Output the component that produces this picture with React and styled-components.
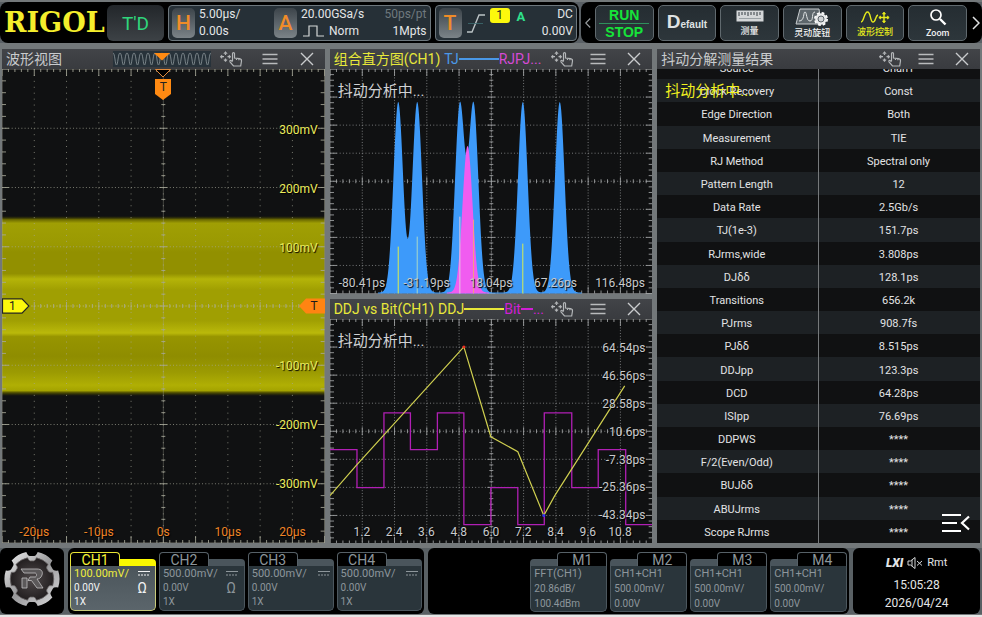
import React from "react";
import styled, { createGlobalStyle, css } from "styled-components";

const GlobalStyle = createGlobalStyle`
  * {
    box-sizing: border-box;
  }
  body {
    margin: 0;
    background: #e6e6e6;
    font-family: Roboto, "Noto Sans CJK SC", sans-serif;
  }
  button {
    font: inherit;
    color: inherit;
    background: none;
    border: 0;
    padding: 0;
    margin: 0;
    cursor: pointer;
  }
`;

const Screen = styled.div`
  display: flex;
  flex-direction: column;
  min-height: 100vh;
  padding: 2px 0 1px;
  background: #73787a;
  border-bottom: 2px solid #e6e6e6;
  color: #e4e6e7;
`;

/* ---------- top bar ---------- */

const TopBar = styled.header`
  display: flex;
  gap: 2px;
  height: 41px;
  background: #5a6065;
`;

const BarGroup = styled.div`
  display: flex;
  align-items: stretch;
  flex: ${(p) => p.$grow} 1 0;
  gap: 4px;
  padding: 3px 2px 2px 4px;
  background: #000;
  border-radius: 8px;
`;

const Logo = styled.div`
  width: 99px;
  font: bold 27px/36px "DejaVu Serif", serif;
  color: #f4ee2c;
`;

const TrigState = styled.button`
  width: 57px;
  border-radius: 6px;
  background: linear-gradient(#22262a, #3d4246);
  color: #2fd67c;
  font-size: 19px;
`;

const InfoPanel = styled.div`
  display: flex;
  align-items: center;
  flex: ${(p) => p.$grow} 1 0;
  gap: 4px;
  padding: 0 3px;
  background: #263037;
  border: 1px solid #6d777d;
  border-radius: 4px;
`;

const Knob = styled.button`
  width: 23px;
  height: 30px;
  border-radius: 5px;
  background: linear-gradient(#3c444a, #7b8388);
  color: #f08c28;
  font-size: 21px;
  font-weight: 500;
  line-height: 30px;
`;

const Lines = styled.div`
  display: flex;
  flex-direction: column;
  flex: ${(p) => (p.$grow ? 1 : "none")};
  width: ${(p) => p.$width || "auto"};
  text-align: ${(p) => p.$align || "left"};
  font-size: 12px;
  line-height: 17px;
  white-space: nowrap;
`;

const Dim = styled.span`
  color: #6f797e;
`;

const WithIcon = styled.span`
  display: flex;
  gap: 5px;
  padding-left: 2px;
`;

const TrigLine = styled.div`
  display: flex;
  align-items: flex-start;
  gap: 7px;
  flex: 1;
  height: 30px;
`;

const SourceChip = styled.span`
  width: 20px;
  height: 15px;
  border-radius: 3px;
  background: #fcf80c;
  color: #222;
  font-size: 12px;
  line-height: 15px;
  text-align: center;
`;

const Auto = styled.span`
  color: #2fe08c;
  font-size: 13px;
  font-weight: 700;
  line-height: 17px;
`;

const ToolButton = styled.button`
  display: flex;
  flex-direction: column;
  align-items: center;
  justify-content: center;
  flex: 1 1 0;
  gap: 1px;
  background: linear-gradient(#252d32, #2d363b);
  border: 1px solid #60696e;
  border-radius: 5px;
  color: ${(p) => p.$color || "#f0f1f2"};
  font-size: 9px;
  font-weight: 500;
  line-height: 12px;
  white-space: nowrap;
`;

const RunStop = styled(ToolButton)`
  color: #16e43a;
  font: bold 14px/16px "Liberation Sans", sans-serif;
  gap: 0;
  span + span {
    border-top: 1px solid #2f8f5c;
  }
  span {
    width: 50px;
  }
`;

const DefaultLabel = styled.div`
  font: bold 10px/20px "Liberation Sans", sans-serif;
  color: #dfe2e3;
  &::first-letter {
    font-size: 19px;
  }
`;

const Scroll = styled.button`
  width: ${(p) => p.$width};
  display: flex;
  align-items: center;
  justify-content: center;
`;

/* ---------- panels ---------- */

const Main = styled.main`
  display: grid;
  grid-template-columns: repeat(3, minmax(0, 1fr));
  gap: 5px;
  flex: 1;
  margin: 6px 2px 5px;
`;

const Column = styled.div`
  display: grid;
  grid-template-columns: minmax(0, 1fr);
  grid-auto-rows: minmax(0, 1fr);
  gap: 5px;
`;

const PanelBox = styled.section`
  display: flex;
  flex-direction: column;
  min-height: 0;
  background: #101112;
`;

const PanelHead = styled.div`
  display: flex;
  align-items: center;
  height: 20px;
  padding-left: 4px;
  background: linear-gradient(#424448, #393b3f);
  color: ${(p) => p.$color || "#c9cbcd"};
`;

const Title = styled.h2`
  margin: 0;
  font-size: 14px;
  font-weight: 400;
  line-height: 20px;
  white-space: nowrap;
`;

const Legend = styled.div`
  display: flex;
  align-items: center;
  flex: 1;
  min-width: 0;
  padding-left: 4px;
  font-size: 14px;
  line-height: 20px;
`;

const Key = styled.span`
  color: ${(p) => p.$color};
`;

const KeyLine = styled.span`
  width: ${(p) => p.$width};
  height: 2px;
  background: ${(p) => p.$color};
`;

const HeadButtons = styled.div`
  display: flex;
  margin-left: auto;
  button {
    width: ${(p) => (p.$wide ? "39px" : "36px")};
    height: 20px;
    display: flex;
    align-items: center;
    justify-content: center;
  }
  button:last-child {
    width: 36px;
  }
`;

const Preview = styled.div`
  margin-left: 51px;
  height: 16px;
  background: #27323a;
  svg {
    display: block;
  }
`;

const Plot = styled.div`
  position: relative;
  flex: 1;
  min-height: 0;
  overflow: hidden;
  > svg {
    position: absolute;
    width: 100%;
    height: 100%;
  }
`;

const axisText = css`
  color: ${(p) => p.$color || "#c8cacc"};
  font-size: 12px;
  line-height: 14px;
  text-shadow: 1px 1px 1px #000;
`;

const XAxis = styled.div`
  ${axisText}
  position: absolute;
  left: 0;
  right: 0;
  bottom: 4px;
  display: flex;
  padding: 0 ${(p) => p.$inset || "0"};
  span {
    flex: 1 1 0;
    text-align: center;
  }
`;

const YAxis = styled.div`
  ${axisText}
  position: absolute;
  inset: 2px 7px 0 auto;
  display: grid;
  grid-template-rows: 1fr repeat(7, 2fr) 1fr;
  align-items: center;
  text-align: right;
  &::before {
    content: "";
  }
`;

const Busy = styled.div`
  position: absolute;
  top: 10px;
  left: 8px;
  font-size: 15px;
  line-height: 24px;
  color: ${(p) => p.$color || "#d0d2d4"};
`;

const LevelMark = styled.button`
  position: absolute;
  top: 50%;
  ${(p) => (p.$right ? "right: 0" : "left: 0")};
  width: 27px;
  height: 16px;
  transform: translateY(-50%);
  font-size: 12px;
  line-height: 16px;
  color: #1a1a1a;
  svg {
    position: absolute;
    left: 0;
    top: 0;
  }
  span {
    position: relative;
    display: block;
    text-align: ${(p) => (p.$right ? "right" : "left")};
    padding: 0 7px;
  }
`;

const TimeMark = styled.button`
  position: absolute;
  top: 0;
  left: 50%;
  width: 18px;
  height: 32px;
  transform: translateX(-50%);
  svg {
    position: absolute;
    left: 0;
    top: 0;
  }
  span {
    position: relative;
    display: block;
    padding-top: 4px;
    font-size: 12px;
    color: #222;
  }
`;

const TableBox = styled.div`
  position: relative;
  display: flex;
  flex: 1;
  align-items: flex-end;
  min-height: 0;
  overflow: hidden;
`;

const Results = styled.table`
  width: 100%;
  height: calc(100% + 13px);
  border-collapse: collapse;
  table-layout: fixed;
  font-size: 11px;
  line-height: 13px;
  color: #e2e3e4;
  text-align: center;
  tr:nth-child(even) {
    background: #1d2124;
  }
  th,
  td {
    padding: 2px 2px 0 0;
    font-weight: 400;
  }
  th {
    border-right: 1px solid #76797b;
  }
`;

const Expand = styled.button`
  position: absolute;
  right: 10px;
  bottom: 8px;
  height: 22px;
`;

/* ---------- bottom bar ---------- */

const BottomBar = styled.footer`
  display: flex;
  gap: 4px;
  height: 66px;
  padding-right: 2px;
  background: #596064;
`;

const Dock = styled.div`
  display: flex;
  align-items: stretch;
  justify-content: flex-end;
  flex: ${(p) => p.$grow} 1 0;
  gap: 3px;
  padding: 4px 2px 3px;
  background: #000;
  border-radius: 6px;
`;

const MenuButton = styled.button`
  width: 64px;
  flex: none;
  background: #000;
  border-radius: 6px;
`;

const Card = styled.button`
  display: flex;
  flex-direction: column;
  flex: ${(p) => (p.$math ? "0 1 77px" : "1 1 0")};
  color: ${(p) => (p.$on ? "#f2f3f4" : "#8d969b")};
  text-align: left;
`;

const CardTop = styled.span`
  display: flex;
  flex-direction: ${(p) => (p.$math ? "row-reverse" : "row")};
  align-items: flex-end;
  width: 100%;
  height: 14px;
`;

const Tab = styled.span`
  width: 50px;
  height: 14px;
  border: 1px solid ${(p) => (p.$on ? "#e8e434" : "#566067")};
  border-bottom: 0;
  border-radius: 4px 4px 0 0;
  background: #000;
  color: ${(p) => (p.$on ? "#f6f236" : "#8d969b")};
  font-size: 14px;
  line-height: 14px;
  text-align: center;
`;

const Ridge = styled.span`
  flex: 1;
  height: 7px;
  border-radius: ${(p) => (p.$math ? "4px 0 0 0" : "0 4px 0 0")};
  background: ${(p) => (p.$on ? "#fbf800" : "#4a555c")};
`;

const CardBody = styled.span`
  display: grid;
  grid-template-columns: 1fr auto;
  align-content: center;
  width: 100%;
  flex: 1;
  padding: 0 3px;
  border: 1px solid ${(p) => (p.$on ? "#c9cb7c" : "#4c575e")};
  border-top: 0;
  border-radius: 0 0 5px 5px;
  background: ${(p) => (p.$on ? "linear-gradient(#4b555b, #5b656b)" : "#2a353b")};
  font-size: 10px;
  line-height: ${(p) => (p.$math ? "15px" : "14px")};
`;

const Scale = styled.span`
  font-size: 11px;
  color: ${(p) => (p.$on ? "#f0ee3c" : "inherit")};
`;

const Omega = styled.span`
  padding-right: 5px;
  font-size: 14px;
  text-align: center;
`;

const Status = styled.div`
  display: flex;
  flex-direction: column;
  align-items: center;
  flex: 128 1 0;
  padding-top: 5px;
  background: #000;
  border-radius: 6px;
  font-size: 12px;
  line-height: 18px;
`;

const StatusRow = styled.div`
  display: flex;
  align-items: center;
  gap: 4px;
  height: 20px;
  margin-bottom: 3px;
  font-size: 11px;
  b {
    font-style: italic;
    font-weight: 900;
    font-size: 12px;
  }
`;

/* ---------- data ---------- */

const results = [
  ["Source", "Chan1"],
  ["Clock Recovery", "Const"],
  ["Edge Direction", "Both"],
  ["Measurement", "TIE"],
  ["RJ Method", "Spectral only"],
  ["Pattern Length", "12"],
  ["Data Rate", "2.5Gb/s"],
  ["TJ(1e-3)", "151.7ps"],
  ["RJrms,wide", "3.808ps"],
  ["DJδδ", "128.1ps"],
  ["Transitions", "656.2k"],
  ["PJrms", "908.7fs"],
  ["PJδδ", "8.515ps"],
  ["DDJpp", "123.3ps"],
  ["DCD", "64.28ps"],
  ["ISIpp", "76.69ps"],
  ["DDPWS", "****"],
  ["F/2(Even/Odd)", "****"],
  ["BUJδδ", "****"],
  ["ABUJrms", "****"],
  ["Scope RJrms", "****"],
];

const channels = [
  { name: "CH1", scale: "100.00mV/", offset: "0.00V", probe: "1X", omega: true, on: true },
  { name: "CH2", scale: "500.00mV/", offset: "0.00V", probe: "1X", omega: true },
  { name: "CH3", scale: "500.00mV/", offset: "0.00V", probe: "1X" },
  { name: "CH4", scale: "500.00mV/", offset: "0.00V", probe: "1X" },
];

const maths = [
  { name: "M1", expr: "FFT(CH1)", scale: "20.86dB/", offset: "100.4dBm" },
  { name: "M2", expr: "CH1+CH1", scale: "500.00mV/", offset: "0.00V" },
  { name: "M3", expr: "CH1+CH1", scale: "500.00mV/", offset: "0.00V" },
  { name: "M4", expr: "CH1+CH1", scale: "500.00mV/", offset: "0.00V" },
];

const tjPeaks = [
  [68.3, 191],
  [87.3, 191],
  [130, 188],
  [143.7, 188],
  [193, 191],
  [230, 191],
];

const spikes = [
  [68.3, 178, "#d8ee50"],
  [87.3, 168, "#a8d8c8"],
  [130, 148, "#e4c8e0"],
  [143.7, 151, "#f0a080"],
  [193, 175, "#d8ee50"],
];

const bell = (peaks, from, to, sigma) => {
  let d = `M${from} 225`;
  for (let x = from; x <= to; x += 0.5) {
    let h = 0;
    peaks.forEach(([c, a]) => {
      h += a * Math.exp(-((x - c) ** 2) / (2 * sigma * sigma));
    });
    d += `L${x} ${(224 - h).toFixed(1)}`;
  }
  return d + `L${to} 225Z`;
};

/* ---------- drawings ---------- */

function Grid({ w, h, color = "#a4a6a8" }) {
  const dx = w / 10;
  const dy = h / 8;
  const lines = [];
  for (let i = 1; i < 10; i++) {
    lines.push(
      <line key={"v" + i} x1={dx * i} x2={dx * i} y1="0" y2={h}
        strokeDasharray={`1 ${dy / 10 - 1}`} opacity="0.7" />
    );
  }
  for (let i = 1; i < 8; i++) {
    lines.push(
      <line key={"h" + i} y1={dy * i} y2={dy * i} x1="0" x2={w}
        strokeDasharray={`1 ${dx / 10 - 1}`} opacity="0.7" />
    );
  }
  let ticks = "";
  for (let i = 0; i <= 50; i++) {
    const x = (i * dx) / 5;
    const n = i % 5 ? 3 : 7;
    const c = i % 5 ? 2 : 4;
    ticks += `M${x} 0V${n}M${x} ${h}V${h - n}M${x} ${h / 2 - c}V${h / 2 + c}`;
  }
  for (let i = 0; i <= 40; i++) {
    const y = (i * dy) / 5;
    const n = i % 5 ? 4 : 7;
    const c = i % 5 ? 2 : 4;
    ticks += `M0 ${y}H${n}M${w} ${y}H${w - n}M${w / 2 - c} ${y}H${w / 2 + c}`;
  }
  return (
    <g stroke={color} strokeWidth="1" fill="none">
      {lines}
      <path d={ticks} opacity="0.85" />
      <path d={`M${w / 2} 0V${h}`} opacity="0.35" />
      <rect x="0" y="0" width={w} height={h} opacity="0.6" />
    </g>
  );
}

const bandStops = [
  [0, "#3a3900", 0],
  [0.02, "#6d6b00", 1],
  [0.04, "#a09f04", 1],
  [0.16, "#9a9902", 1],
  [0.2, "#929000", 1],
  [0.32, "#929000", 1],
  [0.35, "#b4b408", 1],
  [0.41, "#a09f02", 1],
  [0.58, "#a09f02", 1],
  [0.65, "#bab90a", 1],
  [0.67, "#979500", 1],
  [0.78, "#8f8d00", 1],
  [0.87, "#9c9b02", 1],
  [0.94, "#b0af04", 1],
  [0.97, "#a4a300", 1],
  [0.98, "#5a5800", 1],
  [1, "#3a3900", 0],
];

function Waveform() {
  return (
    <svg viewBox="0 0 323 474" preserveAspectRatio="none">
      <defs>
        <linearGradient id="band" x1="0" y1="0" x2="0" y2="1">
          {bandStops.map(([o, c, a]) => (
            <stop key={o} offset={o} stopColor={c} stopOpacity={a} />
          ))}
        </linearGradient>
      </defs>
      <rect x="0" y="147" width="323" height="180" fill="url(#band)" />
      <Grid w={323} h={474} color="#a8a99a" />
      <path d="M0 237H323" stroke="#c8c850" strokeDasharray="1 2" opacity="0.6" />
    </svg>
  );
}

function Histogram() {
  return (
    <svg viewBox="0 0 323 225" preserveAspectRatio="none">
      <Grid w={323} h={225} />
      <path d={bell(tjPeaks, 48, 252, 4.8)} fill="#3d9afa" />
      <path d={bell([[137.7, 143], [137, 4]], 117, 159, 5)} fill="#f05cf0" />
      {spikes.map(([x, y, c]) => (
        <path key={x} d={`M${x} ${y}V225`} stroke={c} strokeWidth="1" />
      ))}
    </svg>
  );
}

function BitPlot() {
  return (
    <svg viewBox="0 0 323 225" preserveAspectRatio="none">
      <Grid w={323} h={225} />
      <path
        d="M0 131H27V169H54V94H80.500V131H107.500V94H134V206H161V169H188V206H214.500V94H242V169H268.500V131H296V206H323"
        fill="none" stroke="#b01fb4" strokeWidth="1.300" />
      <path d="M0 177L27 146L134 28L161 118L188 133L214 197L225 177L295 67"
        fill="none" stroke="#d0d050" strokeWidth="1.200" />
      <circle cx="134" cy="28" r="1.500" fill="#f03020" />
      <circle cx="214" cy="197" r="1.500" fill="#3030f0" />
    </svg>
  );
}

const MoveHandIcon = () => (
  <svg width="24" height="18" viewBox="0 0 24 18" fill="none" stroke="#b4b7b9" strokeWidth="1.200">
    <path d="M6.500 3.500V5M6.500 8.500V10M3 6.700H5M8.500 6.700H10" />
    <path d="M4.800 3.600L6.500 1.500L8.200 3.600ZM4.800 9.800L6.500 11.800L8.200 9.800ZM3 5L1 6.700L3 8.400ZM10 5L12 6.700L10 8.400Z" fill="#b4b7b9" strokeWidth="0.500" />
    <path d="M13.500 11V3.600C13.500 2.300 15.500 2.300 15.500 3.600V8L20.500 8.700C22 9 22.600 9.800 22.500 11L21.700 16H14.500L11 11.800C10.400 10.700 11.700 10 12.500 10.800L13.500 11.800M17.500 8.300V10M19.800 8.600V10.300" />
  </svg>
);

const LinesIcon = () => (
  <svg width="16" height="14" stroke="#b9bbbd" strokeWidth="1.300">
    <path d="M0.500 2.500H15.500M0.500 7H15.500M0.500 11.500H15.500" />
  </svg>
);

const CloseIcon = () => (
  <svg width="14" height="14" stroke="#c9cbcd" strokeWidth="1.400">
    <path d="M1 1L13 13M13 1L1 13" />
  </svg>
);

const PreviewWave = () => {
  let d = "M0 2";
  for (let i = 0; i < 14; i++) {
    const x = i * 7;
    d += `C${x + 2} 2 ${x + 2} 14 ${x + 3.5} 14C${x + 5} 14 ${x + 5} 2 ${x + 7} 2`;
  }
  return (
    <svg width="98" height="16" viewBox="0 0 98 16">
      <path d={d} fill="none" stroke="#8d979b" strokeWidth="0.800" />
      <path d="M41 2H57L49 9.500Z" fill="#ff8a12" />
    </svg>
  );
};

const PulseIcon = () => (
  <svg width="21" height="14" viewBox="0 0 21 14" fill="none" stroke="#d4d7d8" strokeWidth="1.200">
    <path d="M0 13H6V3H14V13H21" />
  </svg>
);

const SlopeIcon = () => (
  <svg width="20" height="22" viewBox="0 0 20 22" fill="none" stroke="#bcc3c6" strokeWidth="1.400">
    <path d="M1 20H6L13 3H19" />
    <path d="M2 11.500H17" stroke="#3f6f72" strokeWidth="0.800" />
  </svg>
);

const RulerIcon = () => (
  <svg width="28" height="15" viewBox="0 0 28 15">
    <rect x="0.500" y="1.500" width="27" height="11" fill="#d4d7d9" />
    <path d="M3 3V7M6 3V6M9 3V6M12 3V7M15 3V6M18 3V6M21 3V7M24 3V6" stroke="#333b40" />
    <path d="M3 9.500H25" stroke="#9aa1a5" />
  </svg>
);

const KnobIcon = () => (
  <svg width="34" height="18" viewBox="0 0 34 18">
    <path d="M5 1H24L26 16H1Z" fill="#5d666b" stroke="#c8cccf" />
    <path d="M4 13C10 13 8 4 10 4S11 13 15 13S16 4 20 4" fill="none" stroke="#e3e6e7" />
    <circle cx="26" cy="11" r="6" fill="none" stroke="#fff" strokeWidth="2" strokeDasharray="2.700 2" />
    <circle cx="26" cy="11" r="5.800" fill="#e9ebec" />
    <circle cx="26" cy="11" r="3" fill="#cfd3d5" stroke="#596268" />
  </svg>
);

const WaveMoveIcon = () => (
  <svg width="30" height="16" viewBox="0 0 30 16" fill="none" stroke="#e6ea1c" strokeWidth="1.400">
    <path d="M1 13C4 13 4 3 7.500 3S10 13 13 13S15 7 18 6" />
    <path d="M24 4V13M19.500 8.500H28.500" />
    <path d="M22.500 5L24 3L25.500 5ZM22.500 12L24 14L25.500 12ZM20.500 7L18.800 8.500L20.500 10ZM27.500 7L29.200 8.500L27.500 10Z" fill="#e6ea1c" strokeWidth="0.800" />
  </svg>
);

const SearchIcon = () => (
  <svg width="18" height="18" viewBox="0 0 18 18" fill="none" stroke="#fff">
    <circle cx="7" cy="7" r="5" strokeWidth="1.700" />
    <path d="M11 11L16.500 16.500" strokeWidth="2.400" />
  </svg>
);

const Chevron = ({ left }) => (
  <svg width="8" height="14" viewBox="0 0 8 14" fill="none" stroke={left ? "#9a9ea1" : "#e0e2e3"} strokeWidth="1.500">
    <path d={left ? "M7 1L1 7L7 13" : "M1 1L7 7L1 13"} />
  </svg>
);

const ExpandIcon = () => (
  <svg width="28" height="20" viewBox="0 0 28 20" fill="none" stroke="#fff" strokeWidth="2.200">
    <path d="M0 2H19M0 10H15M0 18H19M27 3.500L20 10L27 16.500" />
  </svg>
);

const DcIcon = () => (
  <svg width="12" height="7" viewBox="0 0 12 7" fill="none" stroke="currentColor">
    <path d="M0 1.500H12" />
    <path d="M0 5H12" strokeDasharray="2 1" />
  </svg>
);

const MuteIcon = () => (
  <svg width="16" height="12" viewBox="0 0 16 12" fill="none" stroke="#d6d8d9" strokeWidth="1">
    <path d="M1 4V8H3.500L8 11.500V0.500L3.500 4ZM5 3V9M10 4L15 8.500M15 4L10 8.500" />
  </svg>
);

const gearPath = () => {
  let d = "";
  const at = (r, deg) => {
    const a = (deg * Math.PI) / 180;
    return `${(30 + r * Math.cos(a)).toFixed(1)} ${(30 + r * Math.sin(a)).toFixed(1)}`;
  };
  // six teeth with a scooped notch after each one
  for (let i = 0; i < 6; i++) {
    const c = i * 60;
    d += `${i ? "L" : "M"}${at(27.5, c - 18)}A27.500 27.500 0 0 1 ${at(27.5, c + 18)}`;
    d += `Q${at(23, c + 20)} ${at(23, c + 25)}L${at(23, c + 35)}Q${at(23, c + 40)} ${at(27.5, c + 42)}`;
  }
  return d + "Z";
};

const GearLogo = () => (
  <svg width="60" height="60" viewBox="0 0 60 60">
    <defs>
      <linearGradient id="metal" x1="0" y1="0" x2="1" y2="1">
        <stop offset="0" stopColor="#f2f2f2" />
        <stop offset="0.500" stopColor="#98989a" />
        <stop offset="1" stopColor="#dcdcde" />
      </linearGradient>
      <radialGradient id="core">
        <stop offset="0" stopColor="#4f494a" />
        <stop offset="1" stopColor="#231f20" />
      </radialGradient>
    </defs>
    <path d={gearPath()} fill="url(#metal)" />
    <path d={gearPath()} fill="url(#core)" stroke="#6a6768" transform="translate(6.300 6.300) scale(0.790)" />
    <path d="M19 20H35C40 20 41 23 40 26C39 29 37 30 35 30L41 39H35L29.500 31.500H26L28 28H33C35 28 35 24 33 24H22ZM20 29H25V39H20Z" fill="#5c595a" stroke="#c2c0c1" strokeWidth="0.800" />
  </svg>
);

/* ---------- components ---------- */

function Panel({ title, color, wide, preview, legend, children }) {
  return (
    <PanelBox>
      <PanelHead $color={color}>
        <Title>{title}</Title>
        {preview && (
          <Preview>
            <PreviewWave />
          </Preview>
        )}
        {legend && <Legend>{legend}</Legend>}
        <HeadButtons $wide={wide}>
          <button aria-label="move"><MoveHandIcon /></button>
          <button aria-label="menu"><LinesIcon /></button>
          <button aria-label="close"><CloseIcon /></button>
        </HeadButtons>
      </PanelHead>
      {children}
    </PanelBox>
  );
}

function ChannelCard({ item }) {
  return (
    <Card $on={item.on}>
      <CardTop>
        <Tab $on={item.on}>{item.name}</Tab>
        <Ridge $on={item.on} />
      </CardTop>
      <CardBody $on={item.on}>
        <Scale $on={item.on}>{item.scale}</Scale>
        <span><DcIcon /></span>
        <span>{item.offset}</span>
        <Omega>{item.omega ? "Ω" : ""}</Omega>
        <span>{item.probe}</span>
      </CardBody>
    </Card>
  );
}

function MathCard({ item }) {
  return (
    <Card $math>
      <CardTop $math>
        <Tab>{item.name}</Tab>
        <Ridge $math />
      </CardTop>
      <CardBody $math>
        <Scale>{item.expr}</Scale>
        <span />
        <span>{item.scale}</span>
        <span />
        <span>{item.offset}</span>
      </CardBody>
    </Card>
  );
}

function App() {
  return (
    <Screen>
      <GlobalStyle />
      <TopBar>
        <BarGroup $grow={580}>
          <Logo>RIGOL</Logo>
          <TrigState>T'D</TrigState>
          <InfoPanel $grow={267}>
            <Knob>H</Knob>
            <Lines $width="71px">
              <span>5.00µs/</span>
              <span>0.00s</span>
            </Lines>
            <Knob>A</Knob>
            <Lines $grow>
              <span>20.00GSa/s</span>
              <WithIcon>
                <PulseIcon />
                Norm
              </WithIcon>
            </Lines>
            <Lines $align="right">
              <Dim>50ps/pt</Dim>
              <span>1Mpts</span>
            </Lines>
          </InfoPanel>
          <InfoPanel $grow={141}>
            <Knob>T</Knob>
            <SlopeIcon />
            <TrigLine>
              <SourceChip>1</SourceChip>
              <Auto>A</Auto>
            </TrigLine>
            <Lines $align="right">
              <span>DC</span>
              <span>0.00V</span>
            </Lines>
          </InfoPanel>
        </BarGroup>
        <BarGroup $grow={400}>
          <Scroll $width="6px" aria-label="previous"><Chevron left /></Scroll>
          <RunStop>
            <span>RUN</span>
            <span>STOP</span>
          </RunStop>
          <ToolButton>
            <DefaultLabel>Default</DefaultLabel>
          </ToolButton>
          <ToolButton>
            <RulerIcon />
            测量
          </ToolButton>
          <ToolButton>
            <KnobIcon />
            灵动旋钮
          </ToolButton>
          <ToolButton $color="#e6ea1c">
            <WaveMoveIcon />
            波形控制
          </ToolButton>
          <ToolButton>
            <SearchIcon />
            Zoom
          </ToolButton>
          <Scroll $width="9px" aria-label="next"><Chevron /></Scroll>
        </BarGroup>
      </TopBar>

      <Main>
        <Column>
          <Panel title="波形视图" wide preview>
            <Plot>
              <Waveform />
              <YAxis $color="#ecec5c">
                {["300mV", "200mV", "100mV", "", "-100mV", "-200mV", "-300mV"].map((t, i) => (
                  <span key={i}>{t}</span>
                ))}
              </YAxis>
              <XAxis $color="#f08426">
                {["-20µs", "-10µs", "0s", "10µs", "20µs"].map((t) => (
                  <span key={t}>{t}</span>
                ))}
              </XAxis>
              <TimeMark aria-label="trigger position">
                <svg width="18" height="32" viewBox="0 0 18 32">
                  <path d="M1.500 0.500H16.500L9 8Z" fill="#000" stroke="#e08a3c" />
                  <path d="M1 10H17V25L9 31L1 25Z" fill="#ff8a12" />
                </svg>
                <span>T</span>
              </TimeMark>
              <LevelMark>
                <svg width="28" height="16" viewBox="0 0 28 16">
                  <path d="M0.500 0.800H20L27 8L20 15.200H0.500Z" fill="#fcf80c" stroke="#222" strokeWidth="1.200" />
                </svg>
                <span>1</span>
              </LevelMark>
              <LevelMark $right>
                <svg width="27" height="16" viewBox="0 0 27 16">
                  <path d="M27 0.500H8L1 8L8 15.500H27Z" fill="#ff8412" />
                </svg>
                <span>T</span>
              </LevelMark>
            </Plot>
          </Panel>
        </Column>

        <Column>
          <Panel
            title="组合直方图(CH1)"
            color="#e8e83a"
            legend={
              <>
                <Key $color="#4a98e8">TJ</Key>
                <KeyLine $color="#4a98e8" $width="40px" />
                <Key $color="#d64ad6">RJPJ...</Key>
              </>
            }
          >
            <Plot>
              <Histogram />
              <Busy>抖动分析中...</Busy>
              <XAxis>
                {["-80.41ps", "-31.19ps", "18.04ps", "67.26ps", "116.48ps"].map((t) => (
                  <span key={t}>{t}</span>
                ))}
              </XAxis>
            </Plot>
          </Panel>
          <Panel
            title="DDJ vs Bit(CH1)"
            color="#e8e83a"
            legend={
              <>
                <Key $color="#e8e83a">DDJ</Key>
                <KeyLine $color="#e8e83a" $width="40px" />
                <Key $color="#d01fd4">Bit</Key>
                <KeyLine $color="#d01fd4" $width="12px" />
                <Key $color="#d01fd4">...</Key>
              </>
            }
          >
            <Plot>
              <BitPlot />
              <Busy>抖动分析中...</Busy>
              <YAxis>
                {["64.54ps", "46.56ps", "28.58ps", "10.6ps", "-7.38ps", "-25.36ps", "-43.34ps"].map((t) => (
                  <span key={t}>{t}</span>
                ))}
              </YAxis>
              <XAxis $inset="5%">
                {["1.2", "2.4", "3.6", "4.8", "6.0", "7.2", "8.4", "9.6", "10.8"].map((t) => (
                  <span key={t}>{t}</span>
                ))}
              </XAxis>
            </Plot>
          </Panel>
        </Column>

        <Column>
          <Panel title="抖动分解测量结果">
            <TableBox>
              <Results>
                <tbody>
                  {results.map(([name, value]) => (
                    <tr key={name}>
                      <th scope="row">{name}</th>
                      <td>{value}</td>
                    </tr>
                  ))}
                </tbody>
              </Results>
              <Busy $color="#f0f020">抖动分析中...</Busy>
              <Expand aria-label="expand"><ExpandIcon /></Expand>
            </TableBox>
          </Panel>
        </Column>
      </Main>

      <BottomBar>
        <MenuButton aria-label="main menu"><GearLogo /></MenuButton>
        <Dock $grow={356}>
          {channels.map((c) => (
            <ChannelCard key={c.name} item={c} />
          ))}
        </Dock>
        <Dock $grow={421}>
          {maths.map((m) => (
            <MathCard key={m.name} item={m} />
          ))}
        </Dock>
        <Status>
          <StatusRow>
            <b>LXI</b>
            <MuteIcon />
            <span>Rmt</span>
          </StatusRow>
          <span>15:05:28</span>
          <span>2026/04/24</span>
        </Status>
      </BottomBar>
    </Screen>
  );
}

export default App;
